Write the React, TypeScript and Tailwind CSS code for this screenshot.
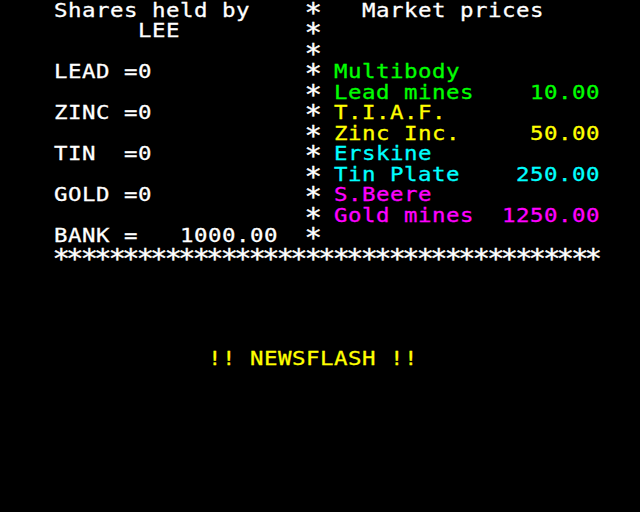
import { Fragment } from 'react';

type Seg = { t: string; c?: string };

const W = 'text-white';
const G = 'text-[#00ff00]';
const Y = 'text-[#ffff00]';
const C = 'text-[#00ffff]';
const M = 'text-[#ff00ff]';

// pad text to start at a given column of the 40 column teletext grid
const at = (line: string, col: number, text: string) => line.padEnd(col, ' ') + text;

const left = (text = '') => at(at('', 1, text), 19, '* ');

const rows: Seg[][] = [
  [{ t: at(left('Shares held by'), 23, 'Market prices') }],
  [{ t: at(at('', 7, 'LEE'), 19, '*') }],
  [{ t: left() }],
  [{ t: left('LEAD =0') }, { t: 'Multibody', c: G }],
  [{ t: left() }, { t: 'Lead mines    10.00', c: G }],
  [{ t: left('ZINC =0') }, { t: 'T.I.A.F.', c: Y }],
  [{ t: left() }, { t: 'Zinc Inc.     50.00', c: Y }],
  [{ t: left('TIN  =0') }, { t: 'Erskine', c: C }],
  [{ t: left() }, { t: 'Tin Plate    250.00', c: C }],
  [{ t: left('GOLD =0') }, { t: 'S.Beere', c: M }],
  [{ t: left() }, { t: 'Gold mines  1250.00', c: M }],
  [{ t: left('BANK =   1000.00') }],
  [{ t: ' ' + '*'.repeat(39) }],
  [],
  [],
  [],
  [],
  [{ t: '            ' }, { t: '!! NEWSFLASH !!', c: Y }],
];

// teletext asterisks are much larger than the font's own
function Text({ t }: { t: string }) {
  const parts = t.split('*');
  return (
    <>
      {parts.map((p, i) => (
        <Fragment key={i}>
          {p}
          {i < parts.length - 1 && <span className="inline-block origin-top scale-[1.3]">*</span>}
        </Fragment>
      ))}
    </>
  );
}

export default function App() {
  return (
    <div
      className="w-[640px] h-[512px] bg-black overflow-hidden pl-[40px]"
      style={{ fontFamily: '"DejaVu Sans Mono", "Liberation Mono", monospace' }}
    >
      {rows.map((row, i) => (
        <div
          key={i}
          className="h-[20.48px] leading-[20.48px] text-[20px] tracking-[0.46px] whitespace-pre origin-left scale-x-[1.12] [-webkit-text-stroke:0.3px_currentColor]"
        >
          {row.map((s, j) => (
            <span key={j} className={s.c ?? W}>
              <Text t={s.t} />
            </span>
          ))}
        </div>
      ))}
    </div>
  );
}
